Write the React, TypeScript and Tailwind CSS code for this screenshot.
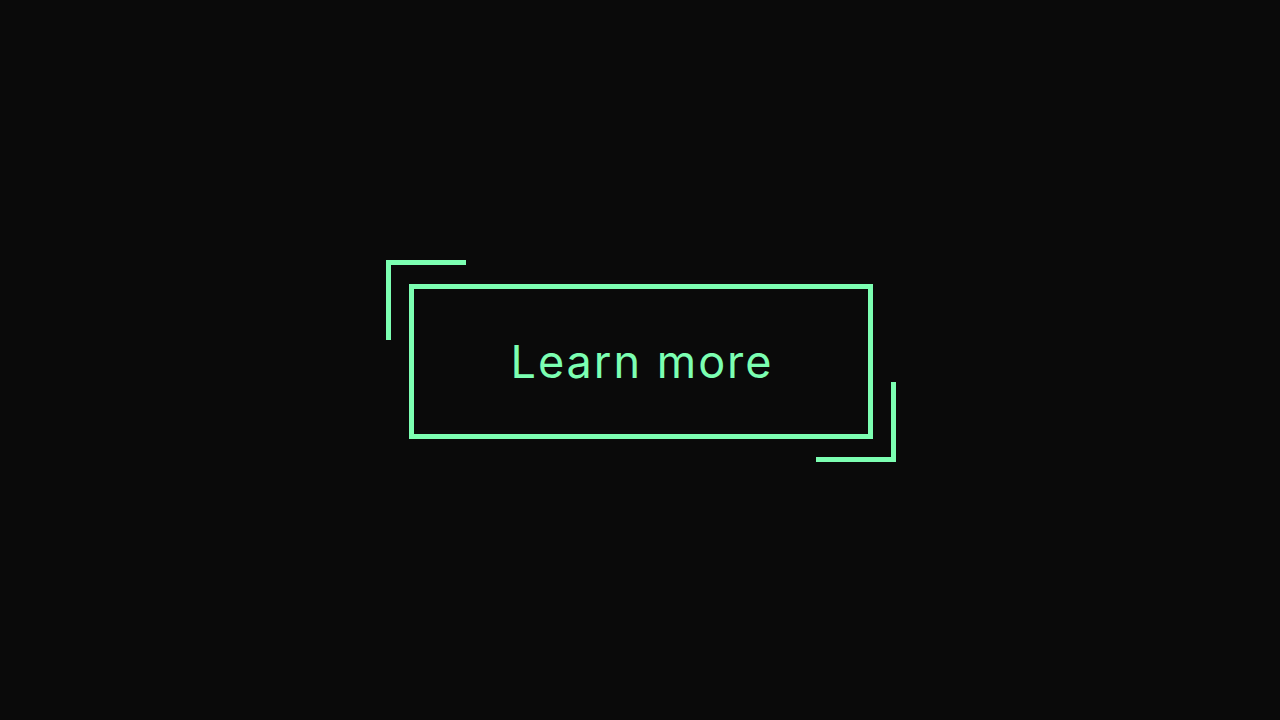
export default function App() {
  return (
    <div className="flex h-[720px] w-full items-center justify-center bg-[#0a0a0a]">
      <div className="relative ml-[2px] mt-[3px]">
        <span className="absolute -left-[23px] -top-[24px] h-[80px] w-[80px] border-l-[5px] border-t-[5px] border-[#7cffb2]" />
        <button className="flex h-[155px] w-[464px] items-center justify-center border-[5px] border-[#7cffb2] pl-[2px] text-[45px] tracking-[2px] text-[#7cffb2] [font-family:Inter,'Noto_Sans',sans-serif]">
          Learn more
        </button>
        <span className="absolute -bottom-[23px] -right-[23px] h-[80px] w-[80px] border-b-[5px] border-r-[5px] border-[#7cffb2]" />
      </div>
    </div>
  );
}
